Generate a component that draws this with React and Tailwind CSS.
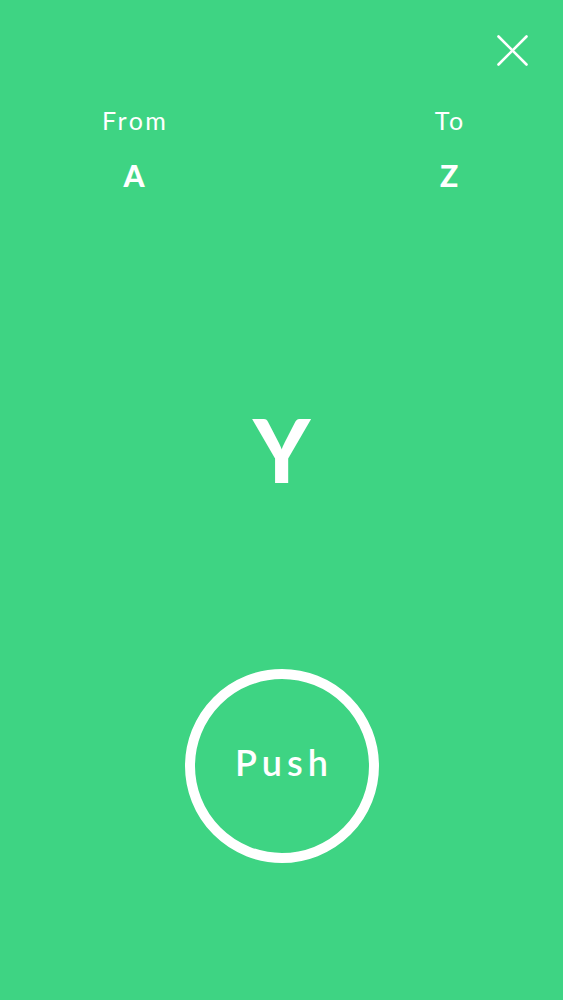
export default function App() {
  return (
    <div className="relative w-full h-[1000px] bg-[#3ed483] text-white flex flex-col items-center" style={{ fontFamily: 'Lato, "Open Sans", sans-serif' }}>
      <button className="absolute top-[35px] right-[35px] w-[31px] h-[31px]" aria-label="Close">
        <svg viewBox="0 0 31 31" width="31" height="31" fill="none" stroke="white" strokeWidth="2.6" strokeLinecap="round">
          <path d="M1.5 1.5 L29.5 29.5" />
          <path d="M29.5 1.5 L1.5 29.5" />
        </svg>
      </button>

      <div className="w-full flex justify-between pl-[84px] pr-[64px] pt-[108px]">
        <div className="w-[100px] flex flex-col items-center">
          <span className="text-[25px] leading-none font-normal tracking-[2.5px] pl-[2.5px]">From</span>
          <span className="mt-[27px] text-[30px] leading-none font-black">A</span>
        </div>
        <div className="w-[100px] flex flex-col items-center">
          <span className="text-[25px] leading-none font-normal tracking-[2.5px] pl-[2.5px]">To</span>
          <span className="mt-[27px] text-[30px] leading-none font-black">Z</span>
        </div>
      </div>

      <div className="mt-[216px] text-[87px] leading-none font-black">Y</div>

      <button className="mt-[176px] w-[194px] h-[194px] rounded-full border-[10px] border-white flex items-center justify-center">
        <span className="text-[36px] leading-none font-semibold tracking-[5px] text-white pl-[5px] mb-[8px]">Push</span>
      </button>
    </div>
  );
}
